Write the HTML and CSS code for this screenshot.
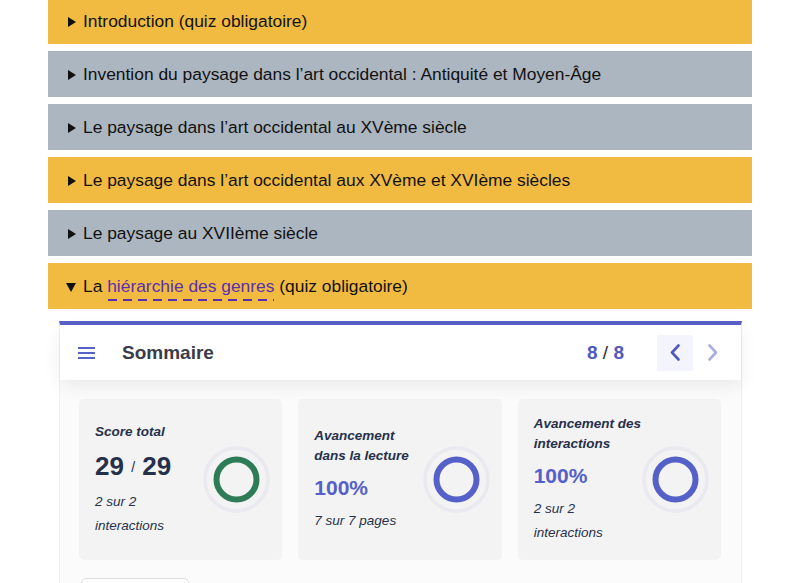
FILE: index.html
```html
<!DOCTYPE html>
<html lang="fr">
<head>
  <meta charset="UTF-8">
  <meta name="viewport" content="width=device-width, initial-scale=1.0">
  <title>Paysage dans l'art</title>
  <link rel="stylesheet" href="styles.css">
</head>
<body>
  <div class="chapters">
    <details class="chapter chapter-quiz">
      <summary class="chapter-title"><span class="marker"></span>Introduction (quiz obligatoire)</summary>
    </details>
    <details class="chapter">
      <summary class="chapter-title"><span class="marker"></span>Invention du paysage dans l’art occidental : Antiquité et Moyen-Âge</summary>
    </details>
    <details class="chapter">
      <summary class="chapter-title"><span class="marker"></span>Le paysage dans l’art occidental au XVème siècle</summary>
    </details>
    <details class="chapter chapter-quiz">
      <summary class="chapter-title"><span class="marker"></span>Le paysage dans l’art occidental aux XVème et XVIème siècles</summary>
    </details>
    <details class="chapter">
      <summary class="chapter-title"><span class="marker"></span>Le paysage au XVIIème siècle</summary>
    </details>
    <details class="chapter chapter-quiz" open>
      <summary class="chapter-title"><span class="marker"></span>La <a class="glossary-link" href="#">hiérarchie des genres</a> (quiz obligatoire)</summary>

      <div class="h5p-panel">
        <div class="panel-header">
          <button class="menu-button" aria-label="Menu">
            <svg width="17" height="12" viewBox="0 0 17 12">
              <rect x="0" y="0" width="17" height="2" />
              <rect x="0" y="5" width="17" height="2" />
              <rect x="0" y="10" width="17" height="2" />
            </svg>
          </button>
          <div class="panel-title">Sommaire</div>
          <div class="page-count"><span>8</span> <span class="page-sep">/</span> <span>8</span></div>
          <div class="nav-buttons">
            <button class="nav-button nav-prev" aria-label="Précédent">
              <svg width="12" height="17" viewBox="0 0 12 17"><path d="M9.5 1.5 L3 8.5 L9.5 15.5" /></svg>
            </button>
            <button class="nav-button nav-next" aria-label="Suivant">
              <svg width="12" height="17" viewBox="0 0 12 17"><path d="M2.5 1.5 L9 8.5 L2.5 15.5" /></svg>
            </button>
          </div>
        </div>

        <div class="panel-body">
          <div class="stats">
            <div class="stat-card">
              <div class="stat-text">
                <div class="stat-title">Score total</div>
                <div class="stat-score">29 <span class="score-sep">/</span> 29</div>
                <div class="stat-desc">2 sur 2 interactions</div>
              </div>
              <svg class="stat-ring" width="67" height="67" viewBox="0 0 67 67">
                <circle class="ring-bg" cx="33.5" cy="33.5" r="31.5" />
                <circle class="ring-fill ring-green" cx="33.5" cy="33.5" r="20" />
              </svg>
            </div>
            <div class="stat-card">
              <div class="stat-text">
                <div class="stat-title">Avancement dans la lecture</div>
                <div class="stat-percent">100%</div>
                <div class="stat-desc">7 sur 7 pages</div>
              </div>
              <svg class="stat-ring" width="67" height="67" viewBox="0 0 67 67">
                <circle class="ring-bg" cx="33.5" cy="33.5" r="31.5" />
                <circle class="ring-fill ring-blue" cx="33.5" cy="33.5" r="20" />
              </svg>
            </div>
            <div class="stat-card">
              <div class="stat-text">
                <div class="stat-title">Avancement des interactions</div>
                <div class="stat-percent">100%</div>
                <div class="stat-desc">2 sur 2 interactions</div>
              </div>
              <svg class="stat-ring" width="67" height="67" viewBox="0 0 67 67">
                <circle class="ring-bg" cx="33.5" cy="33.5" r="31.5" />
                <circle class="ring-fill ring-blue" cx="33.5" cy="33.5" r="20" />
              </svg>
            </div>
          </div>
          <div class="panel-actions">
            <button class="action-button" aria-label="Recommencer"></button>
          </div>
        </div>
      </div>
    </details>
  </div>
</body>
</html>
```

FILE: styles.css
```css
body {
  margin: 0;
  background-color: #ffffff;
  font-family: "Liberation Sans", Arial, sans-serif;
  overflow: hidden;
}

.chapters {
  width: 704px;
  margin: -2px auto 0;
}

.chapter {
  margin-bottom: 7px;
}

.chapter-title {
  display: block;
  list-style: none;
  padding: 12px 18px;
  line-height: 22px;
  font-size: 17.4px;
  color: #111111;
  background-color: #acb6c0; /* grey chapter */
  cursor: pointer;
}

.chapter-title::-webkit-details-marker {
  display: none;
}

.chapter-quiz .chapter-title {
  background-color: #f1bb41; /* yellow quiz chapter */
}

.marker {
  display: inline-block;
  width: 10px;
  height: 10px;
  margin-right: 7px;
  position: relative;
  vertical-align: 0;
}

.marker::before {
  content: "";
  position: absolute;
  left: 2px;
  top: 0;
  border-top: 5px solid transparent;
  border-bottom: 5px solid transparent;
  border-left: 8.5px solid #111111;
}

details[open] .marker::before {
  left: 0;
  top: 1px;
  border-left: 5.5px solid transparent;
  border-right: 5.5px solid transparent;
  border-top: 9px solid #111111;
  border-bottom: none;
}

.glossary-link {
  color: #5a2fae;
  text-decoration: none;
  padding-bottom: 5px;
  background-image: linear-gradient(to right, #5a2fae 9px, transparent 9px);
  background-size: 15px 2px;
  background-repeat: repeat-x;
  background-position: 1px 100%;
}

.h5p-panel {
  margin: 12px 10px 0 11px;
  border-top: 4px solid #5861c9;
  border-left: 1px solid #f0f0f0;
  border-right: 1px solid #ececec;
  background-color: #fbfbfb;
}

.panel-header {
  display: flex;
  align-items: center;
  height: 55px;
  padding: 0 10px 0 18px;
  background-color: #ffffff;
  box-shadow: 0 6px 18px rgba(0, 0, 0, 0.07);
  position: relative;
}

.menu-button {
  border: none;
  background: none;
  padding: 0;
  width: 17px;
  height: 12px;
  fill: #5861c9;
  margin-right: 27px;
}

.menu-button svg {
  display: block;
}

.panel-title {
  flex: 1;
  font-size: 19px;
  font-weight: bold;
  color: #3c3c48;
}

.page-count {
  font-size: 19px;
  font-weight: bold;
  color: #4f5abf;
  margin-right: 33px;
}

.page-sep {
  color: #2b2b35;
  font-weight: normal;
}

.nav-buttons {
  display: flex;
  gap: 2px;
}

.nav-button {
  width: 36px;
  height: 36px;
  border: none;
  border-radius: 2px;
  background: none;
  padding: 0;
  display: flex;
  align-items: center;
  justify-content: center;
}

.nav-button path {
  fill: none;
  stroke-width: 2.6;
  stroke-linecap: round;
  stroke-linejoin: round;
}

.nav-prev {
  background-color: #f4f5fc;
}

.nav-prev path {
  stroke: #4f5abf;
}

.nav-next path {
  stroke: #a9aee0;
}

.panel-body {
  padding: 19px 20px 0 19px;
}

.stats {
  display: grid;
  grid-template-columns: repeat(3, 1fr);
  gap: 16px;
}

.stat-card {
  display: grid;
  grid-template-columns: 1fr 67px;
  align-items: center;
  height: 161px;
  box-sizing: border-box;
  padding: 0 12px 0 16px;
  background-color: #f3f3f4;
  border-radius: 5px;
  color: #26304a;
}

.stat-title {
  font-size: 13.5px;
  line-height: 20px;
  font-weight: bold;
  font-style: italic;
  margin-bottom: 8px;
}

.stat-score {
  font-size: 26px;
  line-height: 32px;
  font-weight: bold;
}

.score-sep {
  font-size: 14px;
  font-weight: normal;
  vertical-align: 3px;
}

.stat-percent {
  font-size: 21px;
  line-height: 28px;
  font-weight: bold;
  color: #5560c8;
}

.stat-desc {
  font-size: 13.5px;
  line-height: 24px;
  font-style: italic;
  margin-top: 7px;
}

.stat-ring {
  display: block;
}

.ring-bg {
  fill: none;
  stroke: #e9e9ef;
  stroke-width: 3.5;
}

.ring-fill {
  fill: none;
  stroke-width: 6;
}

.ring-green {
  stroke: #2e7c57;
}

.ring-blue {
  stroke: #5560c8;
}

.panel-actions {
  padding-top: 18px;
  padding-left: 2px;
}

.action-button {
  display: block;
  width: 108px;
  height: 36px;
  border: 1px solid #dddddd;
  border-radius: 5px;
  background-color: #ffffff;
}
```
